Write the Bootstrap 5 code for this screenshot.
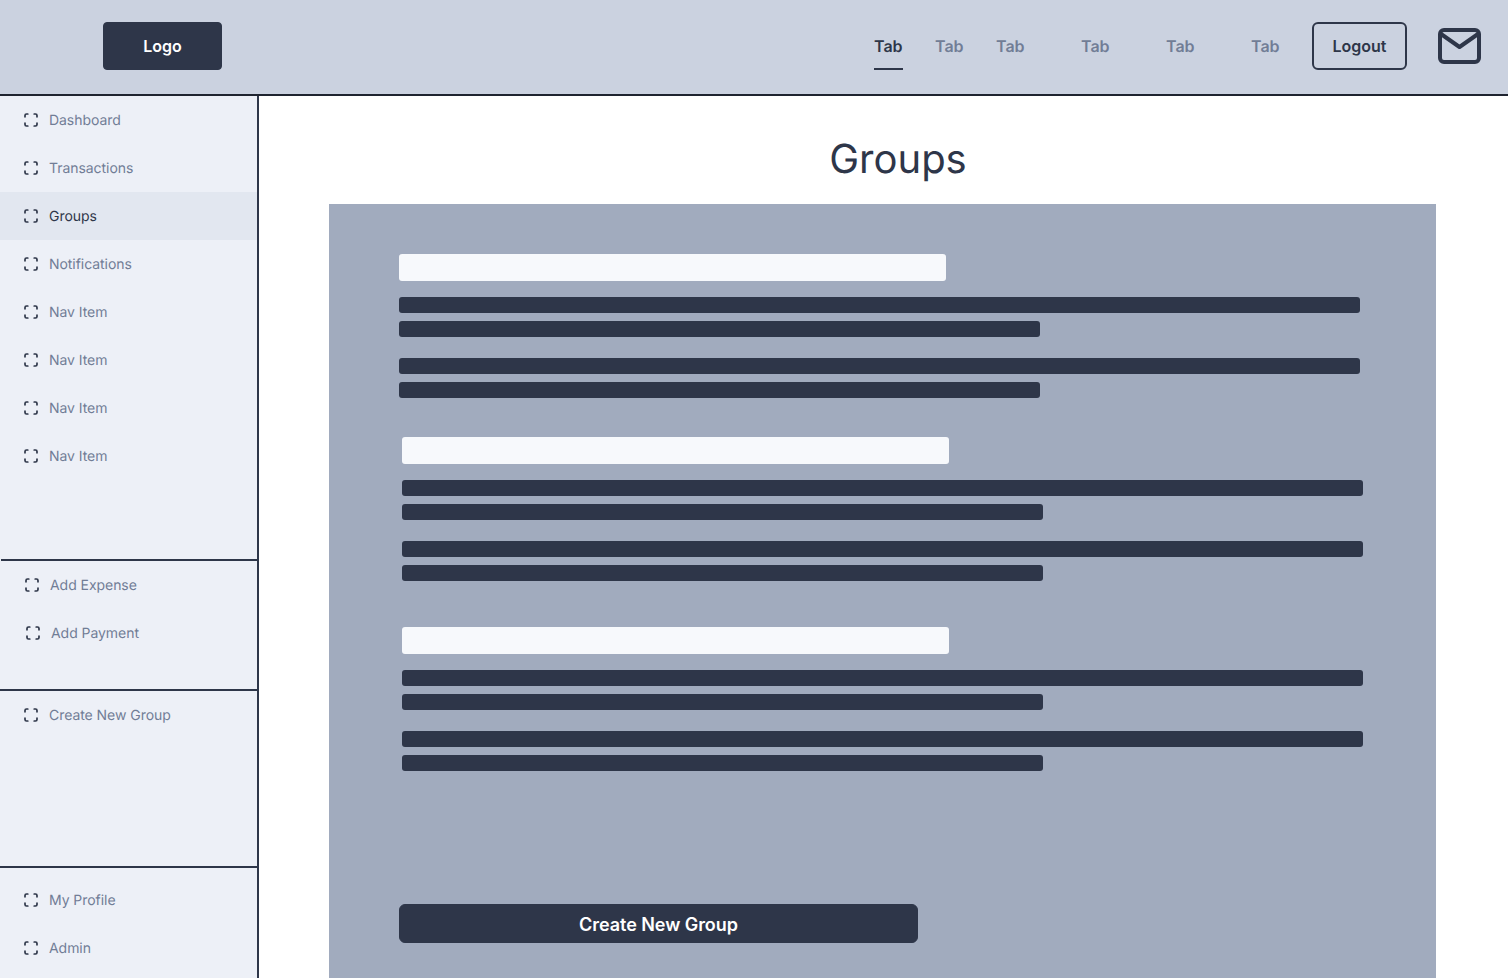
<!DOCTYPE html>
<html lang="en">
<head>
    <meta charset="UTF-8" />
    <title>Groups</title>
    <meta name="viewport" content="width=device-width, initial-scale=1" />
    <link href="https://cdn.jsdelivr.net/npm/bootstrap@5.3.3/dist/css/bootstrap.min.css" rel="stylesheet" />
    <style>
        html, body { height: 978px; overflow: hidden; }
        body { font-family: Inter, "Liberation Sans", sans-serif; color: #2E3649; background: #fff; text-rendering: geometricPrecision; }

        /* top bar */
        .top-bar { height: 96px; padding: 0 27px 2px 103px; background: #CBD2E0; border-bottom: 2px solid #1F2430; }
        .logo-btn { width: 119px; height: 48px; background: #2E3649; border-color: #2E3649; color: #fff; font-size: 16px; font-weight: 600; border-radius: 4px; }
        .logo-btn:hover { background: #2E3649; color: #fff; }
        .top-tabs { margin-right: 32px; }
        .top-tabs .nav-link { width: 29px; height: 48px; padding: 0; line-height: 48px; color: #717D96; font-size: 16px; font-weight: 600; }
        .top-tabs .nav-link.active { color: #2E3649; border-bottom: 2px solid #2E3649; }
        .top-tabs .nav-item { margin-right: 32px; }
        .top-tabs .wide-gap { margin-right: 56px; }
        .top-tabs .nav-item:last-child { margin-right: 0; }
        .logout-btn { width: 95px; height: 48px; padding: 0; border: 2px solid #2E3649; border-radius: 6px; color: #2E3649; font-size: 16px; font-weight: 600; }
        .mail-icon { display: block; margin-left: 31px; }

        /* sidebar */
        .page-body { height: 882px; }
        .side-bar { width: 259px; flex: none; background: #EDF0F7; border-right: 2px solid #2E3649; overflow: hidden; }
        .side-group { border-top: 2px solid #2E3649; }
        .side-group.first { border-top: 0; height: 463px; }
        .side-group.actions { height: 130px; margin-left: 1px; }
        .side-group.create { height: 177px; }
        .side-group.profile { padding-top: 8px; }
        .side-bar .nav-link { display: flex; align-items: center; gap: 11px; height: 48px; padding: 2px 0 0 24px; color: #717D96; font-size: 14px; line-height: 20px; letter-spacing: -0.05px; }
        .side-bar .nav-link.active { background: #E2E7F0; color: #2E3649; }
        .side-bar .nudged { padding-left: 25px; }
        .side-icon { flex: none; margin-top: -2px; }

        /* main */
        .page-title { margin: 0; padding: 38px 0 0 31px; height: 108px; font-size: 40px; line-height: 50px; font-weight: 400; text-align: center; color: #2E3649; }
        .main-col { width: 1107px; margin-left: 70px; flex: none; }
        .groups-panel { height: 774px; padding: 50px 0 0 70px; background: #A1ABBE; }
        .group-item { width: 961px; }
        .group-item.shifted { margin-left: 3px; }
        .group-item.second { margin-top: 39px; }
        .group-item.third { margin-top: 46px; }
        .name-bar { width: 547px; height: 27px; margin-bottom: 16px; background: #F7F9FC; border-radius: 3px; }
        .text-bar { height: 16px; background: #2E3649; border-radius: 3px; }
        .text-bar.short { width: 641px; margin-top: 8px; }
        .text-block + .text-block { margin-top: 21px; }
        .create-btn { display: block; width: 519px; height: 39px; margin-top: 133px; padding: 2px 0 0; background: #2E3649; border-color: #2E3649; color: #fff; font-size: 18px; font-weight: 600; letter-spacing: -0.05px; border-radius: 6px; }
        .create-btn:hover { background: #2E3649; color: #fff; }
    </style>
</head>
<body>
<svg class="d-none">
    <symbol id="frame" viewBox="0 0 14 14">
        <path d="M1 3.800V2.500A1.500 1.500 0 0 1 2.500 1H3.800M10.200 1H11.500A1.500 1.500 0 0 1 13 2.500V3.800M13 10.200V11.500A1.500 1.500 0 0 1 11.500 13H10.200M3.800 13H2.500A1.500 1.500 0 0 1 1 11.500V10.200" fill="none" stroke="#2E3649" stroke-width="1.700" stroke-linecap="round" />
    </symbol>
</svg>

<header class="top-bar d-flex align-items-center">
    <button class="btn logo-btn" type="button">Logo</button>
    <ul class="nav top-tabs ms-auto">
        <li class="nav-item"><a class="nav-link active" href="#">Tab</a></li>
        <li class="nav-item"><a class="nav-link" href="#">Tab</a></li>
        <li class="nav-item wide-gap"><a class="nav-link" href="#">Tab</a></li>
        <li class="nav-item wide-gap"><a class="nav-link" href="#">Tab</a></li>
        <li class="nav-item wide-gap"><a class="nav-link" href="#">Tab</a></li>
        <li class="nav-item"><a class="nav-link" href="#">Tab</a></li>
    </ul>
    <button class="btn logout-btn" type="button">Logout</button>
    <svg class="mail-icon" width="43" height="36" viewBox="0 0 43 36" fill="none" stroke="#2E3649" stroke-width="4" stroke-linejoin="round" stroke-linecap="round">
        <rect x="2" y="2" width="39" height="32" rx="4" />
        <path d="M3 6L21.500 19L40 6" />
    </svg>
</header>

<div class="page-body d-flex">
    <aside class="side-bar">
        <nav class="side-group first nav flex-column">
            <a class="nav-link" href="#"><svg class="side-icon" width="14" height="14"><use href="#frame" /></svg>Dashboard</a>
            <a class="nav-link" href="#"><svg class="side-icon" width="14" height="14"><use href="#frame" /></svg>Transactions</a>
            <a class="nav-link active" href="#"><svg class="side-icon" width="14" height="14"><use href="#frame" /></svg>Groups</a>
            <a class="nav-link" href="#"><svg class="side-icon" width="14" height="14"><use href="#frame" /></svg>Notifications</a>
            <a class="nav-link" href="#"><svg class="side-icon" width="14" height="14"><use href="#frame" /></svg>Nav Item</a>
            <a class="nav-link" href="#"><svg class="side-icon" width="14" height="14"><use href="#frame" /></svg>Nav Item</a>
            <a class="nav-link" href="#"><svg class="side-icon" width="14" height="14"><use href="#frame" /></svg>Nav Item</a>
            <a class="nav-link" href="#"><svg class="side-icon" width="14" height="14"><use href="#frame" /></svg>Nav Item</a>
        </nav>
        <nav class="side-group actions nav flex-column">
            <a class="nav-link" href="#"><svg class="side-icon" width="14" height="14"><use href="#frame" /></svg>Add Expense</a>
            <a class="nav-link nudged" href="#"><svg class="side-icon" width="14" height="14"><use href="#frame" /></svg>Add Payment</a>
        </nav>
        <nav class="side-group create nav flex-column">
            <a class="nav-link" href="#"><svg class="side-icon" width="14" height="14"><use href="#frame" /></svg>Create New Group</a>
        </nav>
        <nav class="side-group profile nav flex-column">
            <a class="nav-link" href="#"><svg class="side-icon" width="14" height="14"><use href="#frame" /></svg>My Profile</a>
            <a class="nav-link" href="#"><svg class="side-icon" width="14" height="14"><use href="#frame" /></svg>Admin</a>
        </nav>
    </aside>

    <main class="main-col">
        <h1 class="page-title">Groups</h1>
        <section class="groups-panel">
            <div class="group-item">
                <div class="name-bar"></div>
                <div class="text-block"><div class="text-bar"></div><div class="text-bar short"></div></div>
                <div class="text-block"><div class="text-bar"></div><div class="text-bar short"></div></div>
            </div>
            <div class="group-item shifted second">
                <div class="name-bar"></div>
                <div class="text-block"><div class="text-bar"></div><div class="text-bar short"></div></div>
                <div class="text-block"><div class="text-bar"></div><div class="text-bar short"></div></div>
            </div>
            <div class="group-item shifted third">
                <div class="name-bar"></div>
                <div class="text-block"><div class="text-bar"></div><div class="text-bar short"></div></div>
                <div class="text-block"><div class="text-bar"></div><div class="text-bar short"></div></div>
            </div>
            <button class="btn create-btn" type="button">Create New Group</button>
        </section>
    </main>
</div>

<script src="https://cdn.jsdelivr.net/npm/bootstrap@5.3.3/dist/js/bootstrap.bundle.min.js"></script>
</body>
</html>
